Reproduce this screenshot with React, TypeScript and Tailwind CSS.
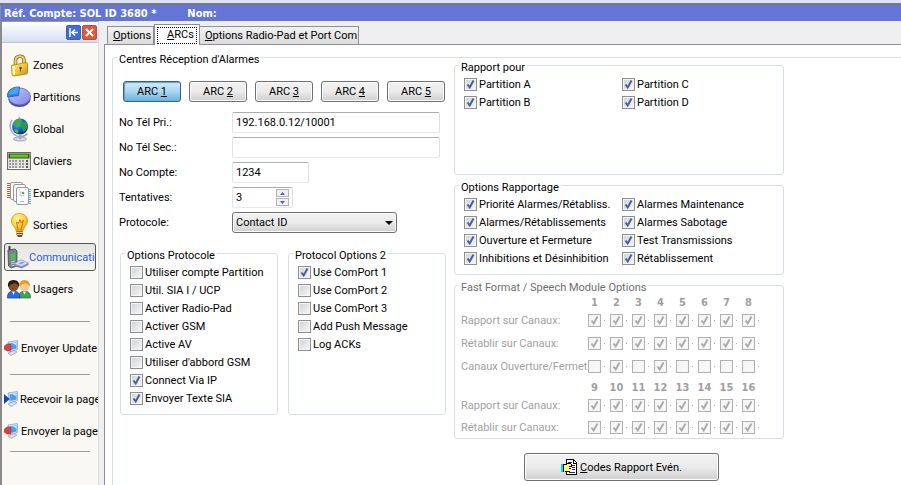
import { useState } from 'react'
import type { ReactNode } from 'react'
import clsx from 'clsx'

const NAV_ITEMS = [
  { label: 'Zones', icon: <LockIcon /> },
  { label: 'Partitions', icon: <PieIcon /> },
  { label: 'Global', icon: <GlobeIcon /> },
  { label: 'Claviers', icon: <KeypadIcon /> },
  { label: 'Expanders', icon: <ExpanderIcon /> },
  { label: 'Sorties', icon: <BulbIcon /> },
  { label: 'Communicati', icon: <PhoneIcon /> },
  { label: 'Usagers', icon: <UsersIcon /> },
]

const PROTOCOL_OPTIONS = [
  { label: 'Utiliser compte Partition', on: false },
  { label: 'Util. SIA I / UCP', on: false },
  { label: 'Activer Radio-Pad', on: false },
  { label: 'Activer GSM', on: false },
  { label: 'Active AV', on: false },
  { label: "Utiliser d'abbord GSM", on: false },
  { label: 'Connect Via IP', on: true },
  { label: 'Envoyer Texte SIA', on: true },
]

const PROTOCOL_OPTIONS_2 = [
  { label: 'Use ComPort 1', on: true },
  { label: 'Use ComPort 2', on: false },
  { label: 'Use ComPort 3', on: false },
  { label: 'Add Push Message', on: false },
  { label: 'Log ACKs', on: false },
]

const REPORT_OPTIONS = [
  'Priorité Alarmes/Rétabliss.',
  'Alarmes/Rétablissements',
  'Ouverture et Fermeture',
  'Inhibitions et Désinhibition',
  'Alarmes Maintenance',
  'Alarmes Sabotage',
  'Test Transmissions',
  'Rétablissement',
]

const ALL = [1, 1, 1, 1, 1, 1, 1, 1]

function LockIcon() {
  return (
    <svg width="24" height="24" viewBox="0 0 24 24" aria-hidden="true">
      <defs>
        <linearGradient id="lock" x1="0" y1="0" x2="1" y2="1">
          <stop offset="0" stopColor="#fff3a0" />
          <stop offset="0.5" stopColor="#f3c73a" />
          <stop offset="1" stopColor="#c98d1c" />
        </linearGradient>
      </defs>
      <path d="M8.500 12V7.500c0-5 8-6 8.500-1V10" fill="none" stroke="#8a6a1c" strokeWidth="3.600" />
      <path d="M8.500 12V7.500c0-5 8-6 8.500-1V10" fill="none" stroke="#f0d060" strokeWidth="2" />
      <path d="M4.500 12.500 19 9.500q1.500 0 1.500 1.500v8.500q0 1.200-1.200 1.500L7 23q-1.500 0-2-1.500z" fill="url(#lock)" stroke="#a87818" strokeWidth="0.800" />
      <path d="M5.500 13.500 8 13v9l-2.300-.5z" fill="#fff6b8" />
      <circle cx="13.500" cy="15" r="1.300" fill="#6d4a08" />
      <path d="M13.500 15v3.500" stroke="#6d4a08" />
    </svg>
  )
}

function PieIcon() {
  return (
    <svg width="24" height="22" viewBox="0 0 24 22" aria-hidden="true">
      <defs>
        <linearGradient id="pie" x1="0" y1="0" x2="1" y2="1">
          <stop offset="0" stopColor="#c5c8ff" />
          <stop offset="1" stopColor="#8184e2" />
        </linearGradient>
      </defs>
      <ellipse cx="12.500" cy="13.500" rx="11" ry="7.500" fill="#4a4da8" />
      <ellipse cx="12.500" cy="10.500" rx="11" ry="8.500" fill="url(#pie)" stroke="#5d60bd" strokeWidth="0.800" />
      <path d="M11.500 9.500 12.500 1C6 .8 1 3.500.5 9v2z" fill="#2b86dc" stroke="#1b5ca8" strokeWidth="0.800" />
      <path d="M11 7.500 12 1.500C6.500 1.500 2 4 1.500 8.500z" fill="#4ba3ef" />
    </svg>
  )
}

function GlobeIcon() {
  return (
    <svg width="24" height="26" viewBox="0 0 24 26" aria-hidden="true">
      <defs>
        <radialGradient id="globe" cx="0.350" cy="0.300" r="0.750">
          <stop offset="0" stopColor="#55b4ff" />
          <stop offset="0.600" stopColor="#1258cf" />
          <stop offset="1" stopColor="#07277e" />
        </radialGradient>
      </defs>
      <ellipse cx="13" cy="23" rx="6.500" ry="2" fill="#d4d8e6" stroke="#8f96ad" strokeWidth="0.800" />
      <path d="M12 19h2.500v4H12z" fill="#a5abbf" />
      <path d="M5 4Q1.500 9 4.500 15t9.500 5.500q4 0 6.500-3" fill="none" stroke="#a2a9be" strokeWidth="1.500" />
      <circle cx="13" cy="10.500" r="8" fill="url(#globe)" />
      <path d="M9 4q3-2 5-1l1 2-2 1 1 2-3 2-1 2-2-2-2-2z" fill="#3fae3d" />
      <path d="m14 8 4-3 2.500 3v3L18 15l-2 1-1-4-2-2z" fill="#2f9a3a" />
      <path d="m8 13 3 1 .5 2-1 1.500Q8 16 7 14z" fill="#55bb3e" />
      <path d="M11 2.500 13 1" stroke="#8f96ad" />
    </svg>
  )
}

function KeypadIcon() {
  return (
    <svg width="24" height="20" viewBox="0 0 24 20" aria-hidden="true">
      <rect x="0.500" y="1.500" width="23" height="17" fill="#e2e2e2" stroke="#6a6a6a" />
      <rect x="1.500" y="2.500" width="21" height="5" fill="#3a4a2a" />
      <rect x="3" y="3.500" width="18" height="3" fill="#65c51b" />
      {[9, 12, 15].map((y) =>
        [2, 5, 8, 12, 15, 19].map((x) => <rect key={`${x}-${y}`} x={x} y={y} width="2" height="2" fill={x === 19 ? '#555' : '#9a9a9a'} />),
      )}
      <path d="M2 17.500h20" stroke="#fff" />
    </svg>
  )
}

function ExpanderIcon() {
  return (
    <svg width="24" height="24" viewBox="0 0 24 24" aria-hidden="true">
      <path d="M1.500 2v16" stroke="#e0512f" strokeWidth="3" strokeDasharray="1 1" />
      <path d="M22.500 8v15" stroke="#4ea9e0" strokeWidth="3" strokeDasharray="1 1" />
      <rect x="3.500" y="1.500" width="12" height="17" rx="1.500" fill="#fafafa" stroke="#999" />
      <rect x="6.500" y="3.500" width="12" height="17" rx="1.500" fill="#fafafa" stroke="#999" />
      <rect x="9.500" y="6.500" width="12" height="17" rx="1.500" fill="#fff" stroke="#999" />
      <rect x="13" y="11" width="4" height="4" rx="1" fill="#f2f2f2" stroke="#aaa" strokeWidth="0.600" />
      <rect x="15" y="11" width="2" height="2" fill="#2fbb37" />
      <path d="M12 8.500h1m5 0h1M13 20.500h4" stroke="#bbb" />
    </svg>
  )
}

function BulbIcon() {
  return (
    <svg width="24" height="26" viewBox="0 0 24 26" aria-hidden="true">
      <defs>
        <radialGradient id="bulb" cx="0.400" cy="0.300" r="0.700">
          <stop offset="0" stopColor="#fff7a8" />
          <stop offset="0.600" stopColor="#ffd23a" />
          <stop offset="1" stopColor="#f0960c" />
        </radialGradient>
      </defs>
      <path d="M12.500 1.500c-5 0-8 3.400-8 7.500 0 4.500 4.500 6 4.800 10.500h6.400C16 15 20.500 13.500 20.500 9c0-4.100-3-7.500-8-7.500z" fill="url(#bulb)" stroke="#d9920f" strokeWidth="0.800" />
      <path d="m11 18-1.500-8 2 1.500L13 7.500l1 3.500 2.500-3L14 18" fill="none" stroke="#e36a10" />
      <path d="M9.500 19.500h6.500v3l-1.500 2.500h-3.500l-1.500-2.500z" fill="#5a5240" />
      <path d="M9.500 20.500h6.500m-6 2h5.500" stroke="#e8d27a" />
    </svg>
  )
}

function PhoneIcon() {
  return (
    <svg width="24" height="24" viewBox="0 0 24 24" aria-hidden="true">
      <path d="M4.500 1v6" stroke="#3a3f48" strokeWidth="2" />
      <path d="m3 5 7-1 2 2v15l-6 2-2.500-2z" fill="#7a8290" stroke="#3f454f" strokeWidth="0.800" />
      <path d="m5.500 9 4.500-.8v6l-4 .8z" fill="#47c93d" />
      <path d="m6 17 4-1m-4 3 4-1m-3.500 3 3.500-1" stroke="#c8ced8" />
      <path d="m9 19 7-4 7.500 3v2l-7 3.500-7.500-2.500z" fill="#8186b3" />
      <path d="m9 19 7-4.500 7.500 3.500-7 3.500z" fill="#d7daf2" stroke="#8d91bd" strokeWidth="0.600" />
      <path d="m13.500 18.500 4-2 2 1-4 2z" fill="#7c9fe8" />
    </svg>
  )
}

function UsersIcon() {
  return (
    <svg width="24" height="20" viewBox="0 0 24 20" aria-hidden="true">
      <path d="M12 19q-.5-7 5.500-7t6 7z" fill="#3fa650" stroke="#26733a" strokeWidth="0.700" />
      <circle cx="17.500" cy="7" r="5" fill="#fbc98d" />
      <path d="M12 7.500Q12 1 17.500 1T23 7.500q-1.500-3-5-3.500-3.500 1-6 3.500z" fill="#e59a22" />
      <path d="m16 12.500 1.500 3 1.500-3z" fill="#fff" />
      <path d="M.5 19q-.5-7 6-7t6.500 7z" fill="#2a6be0" stroke="#153f96" strokeWidth="0.700" />
      <circle cx="6.500" cy="7" r="5.200" fill="#8a4a22" />
      <path d="M1 8Q0 1 6.500 1T12 8q-1-3-4-4-4 .5-7 4z" fill="#2b1a12" />
      <path d="m5 12.500 1.500 3.500L8 12.500z" fill="#fff" />
    </svg>
  )
}

function TransferIcon({ send }: { send?: boolean }) {
  return (
    <svg width="15" height="16" viewBox="0 0 15 16" className="shrink-0" aria-hidden="true">
      <path d="m4 2 9.500-1.500v9L6 11.500z" fill="#cfe4fb" stroke="#8fa3cf" strokeWidth="0.800" />
      <path d="m5.500 3.500 7-1.200v6.200L6.500 10z" fill="#4c9cf0" />
      <path d="m8 3 4.500-.7v3.200z" fill="#c3e3ff" />
      <path d="m4 13 6-2.500 3 1.500-6 3.500z" fill="#dfe2ee" stroke="#8d93ad" strokeWidth="0.700" />
      {send ? (
        <path d="M0 6.500 3 4h3.500q1 3.500 0 7H3L0 9z" fill="#d04545" stroke="#a82c2c" strokeWidth="0.600" />
      ) : (
        <path d="M0 3.500 5.500 8 0 12.500z" fill="#1546c8" stroke="#0c2f96" strokeWidth="0.600" />
      )}
    </svg>
  )
}

function ReportIcon() {
  return (
    <svg width="16" height="16" viewBox="0 0 16 16" shapeRendering="crispEdges" aria-hidden="true">
      <path d="M5.500 .5h7l3 3v12h-10z" fill="#fff" stroke="#000" />
      <path d="M12.500 1v3h3" fill="none" stroke="#000" />
      <path d="M7 3.500h4M11 6.500h3M11 8.500h3M11 10.500h3M8 13.500h6" stroke="#22229a" />
      <path d="M3 6h2l1-1h4v1h1v1H9v1h2v1H9v1h1v1H9v1H4l-1-1z" fill="#ffff66" />
      <path d="M3 5.500h3m0-1h4M8 7.500h3M8 9.500h2M4 12.500h5M10.500 5v2" stroke="#000" />
      <path d="M1 5v8" stroke="#00e0e0" strokeWidth="2" />
      <path d="M2.500 5v8" stroke="#000" />
    </svg>
  )
}

function Group({ title, muted, className, children }: { title: string; muted?: boolean; className?: string; children: ReactNode }) {
  return (
    <fieldset className={clsx('relative min-w-0 rounded-[3px] border border-[#d5dfe5]', className)} disabled={muted}>
      <legend className={clsx('absolute -top-1.5 left-1 bg-white px-0.5 leading-4 whitespace-nowrap', muted && 'text-[#6d6d6d]')}>
        {title}
      </legend>
      {children}
    </fieldset>
  )
}

function CheckBox({ on, name }: { on: boolean; name?: string }) {
  return (
    <span className="relative block size-[13px] shrink-0">
      <input
        type="checkbox"
        defaultChecked={on}
        aria-label={name}
        className="peer block size-[13px] appearance-none border border-[#8e8f8f] bg-linear-to-br from-[#cdd1d7] to-[#f8f8f8] shadow-[inset_0_0_0_1px_#f4f4f4] disabled:border-[#b1b1b1] disabled:from-[#f4f4f4] disabled:to-[#fafafa]"
      />
      <svg viewBox="0 0 13 13" className="pointer-events-none absolute inset-0 hidden size-[13px] text-[#4a5f97] peer-checked:block peer-disabled:text-[#ababab]" aria-hidden="true">
        <path d="m3.500 6.500 2.200 3 3.800-7" fill="none" stroke="currentColor" strokeWidth="2" />
      </svg>
    </span>
  )
}

function CheckRow({ label, on }: { label: string; on: boolean }) {
  return (
    <label className="flex h-[18px] items-center gap-0.5 whitespace-nowrap">
      <CheckBox on={on} />
      {label}
    </label>
  )
}

function ChannelHead({ from, className }: { from: number; className: string }) {
  return (
    <tr className={className}>
      <td />
      {ALL.map((_, i) => (
        <th key={i} className="p-0 pr-px text-center align-bottom font-['DejaVu_Sans_Condensed',sans-serif] leading-3 font-bold">{from + i}</th>
      ))}
    </tr>
  )
}

function ChannelRow({ label, values, from, className }: { label: string; values: number[]; from: number; className: string }) {
  return (
    <tr className={className}>
      <th className="p-0 text-left font-normal whitespace-nowrap">{label}</th>
      {values.map((v, i) => (
        <td key={i} className="p-0">
          <span className="flex items-center gap-[3px] pl-1">
            <CheckBox on={v === 1} name={`${label} ${from + i}`} />
            <span className="size-px bg-[#a8a8a8]" />
          </span>
        </td>
      ))}
    </tr>
  )
}

function Field({ id, label, children }: { id: string; label: string; children: ReactNode }) {
  return (
    <div className="flex h-[21px] items-center">
      <label htmlFor={id} className="w-[113px] shrink-0">{label}</label>
      {children}
    </div>
  )
}

const inputBox = 'h-[21px] rounded-[2px] border border-t-[#abadb3] border-r-[#dbdfe6] border-b-[#e3e9ef] border-l-[#e2e3ea] bg-white px-[3px]'
const raised = 'rounded-[3px] border border-[#707070] bg-linear-to-b from-[#f2f2f2] from-0% via-[#ebebeb] via-50% to-[#cfcfcf] shadow-[inset_0_0_0_1px_#fcfcfc]'
const tab = 'h-[18px] border border-b-0 border-[#8c8e9b] bg-linear-to-b from-[#f2f2f2] to-[#dcdcdc] pl-[5px]'

function Sidebar() {
  return (
    <aside className="w-[99px] shrink-0 overflow-hidden border-t border-r border-l-2 border-t-[#9a9a9a] border-r-[#dcdcdc] border-l-[#8a8a8a] bg-[#f9f8f3]">
      <div className="flex h-[21px] items-center justify-end gap-px border-b border-[#b9c3dc] bg-linear-to-b from-white to-[#d6def0] pr-px">
        <button aria-label="Réduire" className="grid size-[15px] place-items-center rounded-[2px] border border-[#4a5f9c] bg-[#3d6ee0]">
          <svg width="11" height="11" viewBox="0 0 11 11" fill="none" stroke="#fff" strokeWidth="1.500" aria-hidden="true">
            <path d="M2 1v9M10 5.500H4M7 2.500l-3 3 3 3" />
          </svg>
        </button>
        <button aria-label="Fermer" className="grid size-[15px] place-items-center rounded-[2px] border border-[#9a5a4c] bg-[#e05a3a]">
          <svg width="9" height="9" viewBox="0 0 9 9" stroke="#fff" strokeWidth="2" aria-hidden="true">
            <path d="m1 1 7 7M8 1 1 8" />
          </svg>
        </button>
      </div>
      <nav className="px-0.5 pt-1.5">
        {NAV_ITEMS.map((item) => {
          const active = item.label === 'Communicati'
          return (
            <a key={item.label} href="#" className="flex h-8 items-center">
              <span
                className={clsx(
                  'flex h-7 w-full items-center rounded-[3px] border whitespace-nowrap',
                  active ? 'border-[#555] bg-linear-to-b from-[#e4e4e0] to-[#f6f5f0] text-[#2a5bd0]' : 'gap-0.5 border-transparent pl-0.5',
                )}
              >
                <span className="flex w-6 shrink-0 justify-center">{item.icon}</span>
                {item.label}
              </span>
            </a>
          )
        })}
        <hr className="mx-1.5 mt-4 mb-2.5 border-[#9b9b9b]" />
        <a href="#" className="flex h-8 items-center gap-0.5 whitespace-nowrap">
          <TransferIcon send />
          Envoyer Update
        </a>
        <hr className="mx-1.5 mt-2.5 mb-2 border-[#9b9b9b]" />
        <a href="#" className="flex h-8 items-center gap-px whitespace-nowrap">
          <TransferIcon />
          Recevoir la page
        </a>
        <a href="#" className="flex h-8 items-center gap-0.5 whitespace-nowrap">
          <TransferIcon send />
          Envoyer la page
        </a>
        <hr className="mx-1.5 mt-1 border-[#9b9b9b]" />
      </nav>
    </aside>
  )
}

export default function App() {
  const [arc, setArc] = useState(1)
  const [tries, setTries] = useState(3)

  return (
    <div className="flex min-h-screen flex-col overflow-hidden bg-[#efefef] font-['Roboto','Noto_Sans',sans-serif] text-[11px] leading-[13px] text-black">
      <div className="h-[5px] border-b-2 border-[#77777f] bg-[#dfe4f5]" />
      <header className="flex h-4 items-center gap-[31px] border-l border-[#8a8a8a] bg-[#6375d6] pl-[3px] font-['DejaVu_Sans_Condensed',sans-serif] font-bold whitespace-pre text-white">
        <h1>Réf. Compte: SOL ID 3680 *</h1>
        <span>Nom:</span>
      </header>

      <div className="flex flex-1">
        <Sidebar />
        <main className="ml-[5px] flex min-w-0 flex-1 flex-col">
          <div role="tablist" className="flex h-[23px] items-end pl-[3px]">
            <button role="tab" className={clsx(tab, 'pr-0.5')}>
              <u>O</u>ptions
            </button>
            <button role="tab" aria-selected="true" className="relative -mb-px h-[21px] border border-b-0 border-[#8c8e9b] bg-white px-0.5">
              <span className="block border border-dotted border-black pr-0.5 pb-0.5 pl-[9px]">
                <u>A</u>RCs
              </span>
            </button>
            <button role="tab" className={clsx(tab, '-ml-px pr-px')}>
              <u>O</u>ptions Radio-Pad et Port Com
            </button>
          </div>

          <div role="tabpanel" className="flex-1 border-t border-l border-[#8c8e9b] bg-white pt-3 pl-[7px]">
            <Group title="Centres Réception d'Alarmes" className="flex h-full gap-2 rounded-none rounded-tl-[3px] border-r-0 border-b-0 pl-1.5">
              <div className="w-[327px] shrink-0 pt-[23px]">
                <div className="flex gap-2 pl-1">
                  {[1, 2, 3, 4, 5].map((n) => (
                    <button
                      key={n}
                      onClick={() => setArc(n)}
                      className={clsx(
                        'h-[21px] w-[58px]',
                        arc === n
                          ? 'rounded-[3px] border border-[#2c628b] bg-linear-to-b from-[#d5ebf8] from-0% via-[#a9d6f0] via-50% to-[#68b3db] shadow-[inset_1px_1px_1px_#6b9fc2]'
                          : raised,
                      )}
                    >
                      ARC <u>{n}</u>
                    </button>
                  ))}
                </div>

                <div className="mt-2.5 flex flex-col gap-1">
                  <Field id="tel1" label="No Tél Pri.:">
                    <input id="tel1" defaultValue="192.168.0.12/10001" className={clsx(inputBox, 'w-52')} />
                  </Field>
                  <Field id="tel2" label="No Tél Sec.:">
                    <input id="tel2" className={clsx(inputBox, 'w-52')} />
                  </Field>
                  <Field id="compte" label="No Compte:">
                    <input id="compte" defaultValue="1234" className={clsx(inputBox, 'w-[77px]')} />
                  </Field>
                  <Field id="tentatives" label="Tentatives:">
                    <div className={clsx(inputBox, 'flex w-[61px] items-center')}>
                      <input id="tentatives" value={tries} onChange={(e) => setTries(Number(e.target.value) || 0)} className="w-full min-w-0 outline-none" />
                      <span className="flex flex-col gap-px">
                        <button aria-label="Plus" onClick={() => setTries(tries + 1)} className="grid h-2 w-[13px] place-items-center border border-[#b4b4b4] bg-[#f0f0f0]">
                          <svg width="5" height="3" viewBox="0 0 5 3" fill="#4a62b0" aria-hidden="true"><path d="M0 3 2.500 0 5 3z" /></svg>
                        </button>
                        <button aria-label="Moins" onClick={() => setTries(tries - 1)} className="grid h-2 w-[13px] place-items-center border border-[#b4b4b4] bg-[#f0f0f0]">
                          <svg width="5" height="3" viewBox="0 0 5 3" fill="#4a62b0" aria-hidden="true"><path d="M0 0h5L2.500 3z" /></svg>
                        </button>
                      </span>
                    </div>
                  </Field>
                  <Field id="protocole" label="Protocole:">
                    <div className="relative">
                      <select id="protocole" className={clsx(raised, 'h-[21px] w-[165px] appearance-none pl-[3px]')}>
                        <option>Contact ID</option>
                      </select>
                      <svg width="8" height="4" viewBox="0 0 8 4" className="pointer-events-none absolute top-[9px] right-1" aria-hidden="true">
                        <path d="M0 0h8L4 4z" />
                      </svg>
                    </div>
                  </Field>
                </div>

                <div className="mt-5 grid grid-cols-2 gap-2.5 pl-px">
                  <Group title="Options Protocole" className="pt-[9px] pb-[7px] pl-[9px]">
                    {PROTOCOL_OPTIONS.map((o) => <CheckRow key={o.label} {...o} />)}
                  </Group>
                  <Group title="Protocol Options 2" className="pt-[9px] pb-[7px] pl-[9px]">
                    {PROTOCOL_OPTIONS_2.map((o) => <CheckRow key={o.label} {...o} />)}
                  </Group>
                </div>
              </div>

              <div className="flex w-[330px] shrink-0 flex-col gap-2.5 pt-[7px]">
                <Group title="Rapport pour" className="min-h-[110px] pt-[9px] pl-[9px]">
                  <div className="grid grid-flow-col grid-cols-[158px_1fr] grid-rows-2">
                    {['A', 'B', 'C', 'D'].map((p) => <CheckRow key={p} label={`Partition ${p}`} on />)}
                  </div>
                </Group>
                <Group title="Options Rapportage" className="pt-[9px] pb-[7px] pl-[9px]">
                  <div className="grid grid-flow-col grid-cols-[158px_1fr] grid-rows-4">
                    {REPORT_OPTIONS.map((label) => <CheckRow key={label} label={label} on />)}
                  </div>
                </Group>
                <Group title="Fast Format / Speech Module Options" muted className="pt-[9px] pl-1.5">
                  <table className="w-[299px] table-fixed border-collapse text-[#9f9f9f]">
                    <colgroup>
                      <col className="w-[123px]" />
                      <col span={8} className="w-[22px]" />
                    </colgroup>
                    <tbody>
                      <ChannelHead from={1} className="h-[14px]" />
                      <ChannelRow label="Rapport sur Canaux:" from={1} values={ALL} className="h-[23px]" />
                      <ChannelRow label="Rétablir sur Canaux:" from={1} values={ALL} className="h-[23px]" />
                      <ChannelRow label="Canaux Ouverture/Fermet" from={1} values={[0, 1, 0, 1, 0, 0, 0, 0]} className="h-[23px]" />
                      <ChannelHead from={9} className="h-4" />
                      <ChannelRow label="Rapport sur Canaux:" from={9} values={ALL} className="h-[22px]" />
                      <ChannelRow label="Rétablir sur Canaux:" from={9} values={ALL} className="h-[22px]" />
                    </tbody>
                  </table>
                </Group>
                <button className={clsx(raised, 'mt-1 ml-[70px] flex h-7 w-[195px] items-center justify-center gap-[3px]')}>
                  <ReportIcon />
                  <span><u>C</u>odes Rapport Evén.</span>
                </button>
              </div>
            </Group>
          </div>
        </main>
      </div>
    </div>
  )
}
